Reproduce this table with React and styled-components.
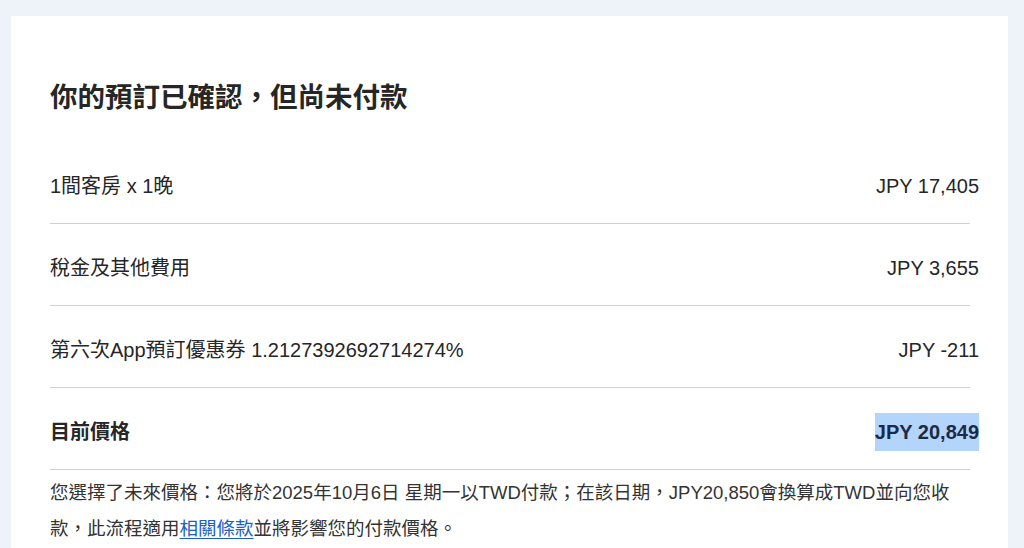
import React from "react";
import styled, { createGlobalStyle } from "styled-components";

const Global = createGlobalStyle`
  html, body { margin: 0; padding: 0; background: #eef3fa; }
  body {
    font-family: "Liberation Sans", "Noto Sans CJK TC", sans-serif;
    color: #2a2a2a;
    -webkit-font-smoothing: antialiased;
  }
`;

const Page = styled.div`
  padding: 16px 16px 0 11px;
  height: 548px;
  box-sizing: border-box;
  overflow: hidden;
`;

const Card = styled.div`
  background: #ffffff;
  padding: 64px 29px 40px 39px;
  min-height: 600px;
`;

const Title = styled.h1`
  margin: 0 0 26px;
  font-size: 27.5px;
  line-height: 36px;
  font-weight: 700;
  color: #262626;
`;

const Row = styled.div`
  display: flex;
  justify-content: space-between;
  align-items: center;
  padding: 32px 0 25px;
  font-size: 20px;
  line-height: 24px;
  font-weight: ${(p) => (p.$bold ? 700 : 400)};
`;

const Label = styled.span`
  color: #262626;
`;

const Amount = styled.span`
  color: ${(p) => (p.$total ? "#1b2a47" : "#262626")};
  ${(p) =>
    p.$total &&
    `
    display: inline-block;
    background: #b3d4fb;
    height: 38px;
    line-height: 38px;
    margin: -7px 0;
  `}
`;

const Divider = styled.div`
  height: 1px;
  background: #cfd1d4;
  margin-right: 9px;
`;

const Note = styled.p`
  margin: 5px 0 0;
  padding-right: 10px;
  font-size: 18.5px;
  line-height: 36px;
  color: #333333;
`;

const Link = styled.a`
  color: #1a5fc4;
  text-decoration: underline;
  text-underline-offset: 3px;
`;

const items = [
  { label: "1間客房 x 1晚", amount: "JPY 17,405" },
  { label: "稅金及其他費用", amount: "JPY 3,655" },
  { label: "第六次App預訂優惠券 1.2127392692714274%", amount: "JPY -211" },
];

export default function App() {
  return (
    <>
      <Global />
      <Page>
        <Card>
          <Title>你的預訂已確認，但尚未付款</Title>
          {items.map((it) => (
            <React.Fragment key={it.label}>
              <Row>
                <Label>{it.label}</Label>
                <Amount>{it.amount}</Amount>
              </Row>
              <Divider />
            </React.Fragment>
          ))}
          <Row $bold>
            <Label>目前價格</Label>
            <Amount $total>JPY 20,849</Amount>
          </Row>
          <Divider />
          <Note>
            您選擇了未來價格：您將於2025年10月6日 星期一以TWD付款；在該日期，JPY20,850會換算成TWD並向您收款，此流程適用
            <Link href="#">相關條款</Link>
            並將影響您的付款價格。
          </Note>
        </Card>
      </Page>
    </>
  );
}
